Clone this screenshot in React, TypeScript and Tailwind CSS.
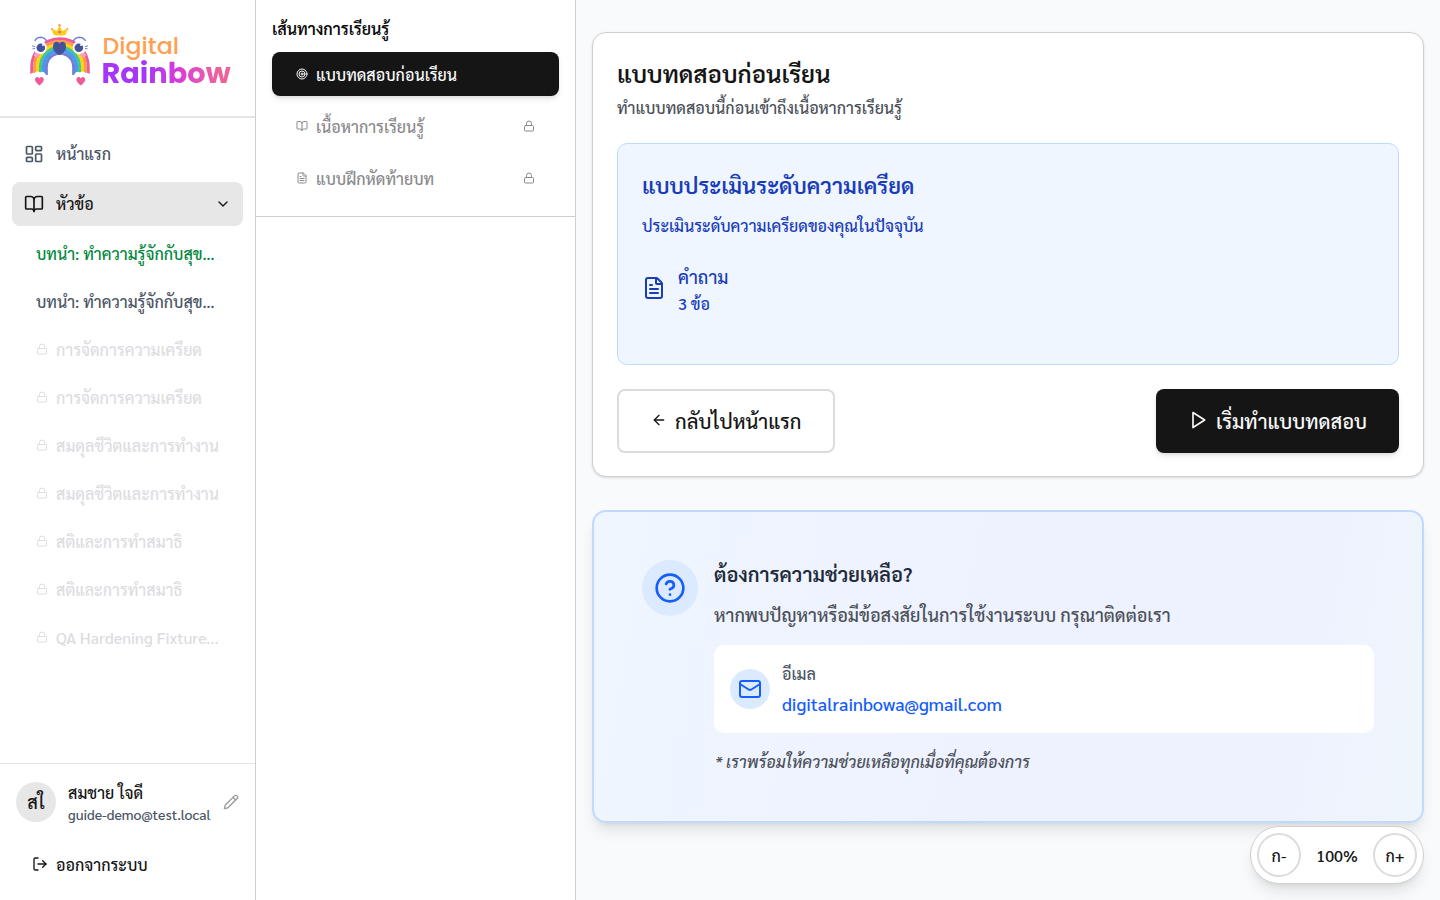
import React from "react";
import {
  LayoutDashboard, BookOpen, ChevronDown, Lock, Pencil, LogOut, Target, FileText,
  ArrowLeft, CircleHelp, Mail,
} from "lucide-react";

const lockedTopics = [
  "การจัดการความเครียด",
  "การจัดการความเครียด",
  "สมดุลชีวิตและการทำงาน",
  "สมดุลชีวิตและการทำงาน",
  "สติและการทำสมาธิ",
  "สติและการทำสมาธิ",
  "QA Hardening Fixture...",
];

function Heart({ x, y }: { x: number; y: number }) {
  return (
    <path
      transform={`translate(${x} ${y})`}
      d="M0 8.4C-2.6 6.3-4.4 4.6-4.4 2.5-4.4.9-3.3 0-2.2 0-1.2 0-.4.6 0 1.5.4.6 1.2 0 2.2 0 3.3 0 4.4.9 4.4 2.5 4.4 4.6 2.6 6.3 0 8.4Z"
      fill="#ef5b97"
    />
  );
}

function RainbowMark() {
  const bands = [
    { r: 28.2, c: "#ef5b97" },
    { r: 25.3, c: "#fb9a4b" },
    { r: 22.4, c: "#fdd60a" },
    { r: 19.5, c: "#46c58c" },
    { r: 16.6, c: "#3f9bf5" },
    { r: 13.7, c: "#6f80d8" },
  ];
  return (
    <svg width="64" height="66" viewBox="28 22 64 66" fill="none">
      {bands.map(({ r, c }) => (
        <path
          key={c}
          d={`M${60 - r} 75V66.9A${r} ${r} 0 0 1 ${60 + r} 66.9V75`}
          stroke={c}
          strokeWidth="3.1"
        />
      ))}
      <path d="M29 75.500Q31 72 34.500 73Q37 70.500 40 72.500Q43.500 70.500 45.500 74L47 77H29ZM91 75.500Q89 72 85.500 73Q83 70.500 80 72.500Q76.500 70.500 74.500 74L73 77H91Z" fill="#fff" />
      <path d="M53.500 34.700L51.500 28.600L56.800 31L59.600 25.500L62.400 31L67.700 28.600L65.700 34.700Q59.600 36.500 53.500 34.700Z" fill="#fdcb16" />
      <circle cx="59.600" cy="25.300" r="1.200" fill="#fb9a4b" />
      <circle cx="51.800" cy="29" r="1" fill="#fb9a4b" />
      <circle cx="67.400" cy="29" r="1" fill="#fb9a4b" />
      <circle cx="59.600" cy="32" r="1.300" fill="#ef5b97" />
      <circle cx="40" cy="47.500" r="6.800" fill="#fff" />
      <circle cx="79.500" cy="47.500" r="6.800" fill="#fff" />
      <circle cx="40.800" cy="47.800" r="4.300" fill="#46519c" />
      <circle cx="78.800" cy="47.800" r="4.300" fill="#46519c" />
      <circle cx="43" cy="45" r="1" fill="#fff" />
      <circle cx="81" cy="45" r="1" fill="#fff" />
      <path d="M35 41Q36 37.500 40.500 37.200Q45 37.500 46.800 41.500M73 41.500Q75 37.500 79.500 37.200Q84 37.500 85.500 41" stroke="#6f80d8" strokeWidth="1.400" />
      <path d="M32 45.800l3 .8M32.500 48.800l2.500-.3M88 45.800l-3 .8M87.500 48.800l-2.500-.3" stroke="#6f80d8" strokeWidth="1" />
      <ellipse cx="37" cy="55" rx="3" ry="2" fill="#fba3bd" />
      <ellipse cx="83" cy="55" rx="3" ry="2" fill="#fba3bd" />
      <path d="M59.500 55.200C55 53 53 50.500 53 46.500C53 43.500 54.500 41.800 56.500 41.800C58 41.800 59 42.500 59.500 43.500C60 42.500 61 41.800 62.500 41.800C64.500 41.800 66 43.500 66 46.500C66 50.500 64 53 59.500 55.200Z" fill="#46519c" />
      <Heart x={39.4} y={77} />
      <Heart x={80.8} y={77} />
    </svg>
  );
}

function Logo() {
  return (
    <div className="flex h-[118px] shrink-0 items-start border-b-2 border-[#e5e5e5] pl-7 pt-[22px]">
      <RainbowMark />
      <div className="ml-[9.5px] pt-[10px] font-['Poppins',sans-serif] whitespace-nowrap">
        <div className="h-[27px] pl-px text-[23.7px] leading-[27px] font-medium text-[#fda052]">Digital</div>
        <div className="w-fit bg-gradient-to-r from-[#a636f8] from-35% via-[#d93bd8] via-60% to-[#f0609a] to-90% bg-clip-text text-[28.8px] leading-[29px] font-bold text-transparent">
          Rainbow
        </div>
      </div>
    </div>
  );
}

function Sidebar() {
  return (
    <aside className="flex w-64 shrink-0 flex-col border-r border-[#cfcfcf] bg-white">
      <Logo />
      <nav className="flex flex-1 flex-col px-3 pt-[13.5px]">
        <a className="flex h-11 items-center gap-3 pl-3 font-medium text-[#4a5565]">
          <LayoutDashboard size={20} />
          <span className="pt-px">หน้าแรก</span>
        </a>
        <a className="mt-1.5 flex h-11 items-center gap-3 rounded-lg bg-[#e7e7e7] px-3 font-medium text-[#151515]">
          <BookOpen size={20} />
          <span className="flex-1 pt-px">หัวข้อ</span>
          <ChevronDown size={16} />
        </a>
        <div className="mt-1.5 flex flex-col gap-1 pl-6">
          <a className="flex h-11 items-center pt-px font-medium text-[#00873c]">บทนำ: ทำความรู้จักกับสุข…</a>
          <a className="flex h-11 items-center pt-px font-medium text-[#4a5565]">บทนำ: ทำความรู้จักกับสุข…</a>
          {lockedTopics.map((t, i) => (
            <a key={i} className="flex h-11 items-center gap-2 font-medium whitespace-nowrap text-[#dcdde1]">
              <Lock size={12} className="mb-px" />
              <span className="pt-px">{t}</span>
            </a>
          ))}
        </div>
      </nav>
      <div className="h-[137px] shrink-0 border-t border-[#e5e5e5] px-4 pt-[15px]">
        <div className="flex h-[46px] items-center">
          <div className="flex size-10 items-center justify-center rounded-full bg-[#e7e7e7] text-lg font-medium text-[#151515]">สใ</div>
          <div className="ml-3 flex-1 pt-[3px]">
            <div className="h-[22px] leading-[22px] font-medium text-[#151515]">สมชาย ใจดี</div>
            <div className="h-[22px] text-sm leading-[21px] font-medium text-[#4a5565]">guide-demo@test.local</div>
          </div>
          <Pencil size={16} className="text-[#9a9a9f]" />
        </div>
        <button className="mt-[17px] flex h-11 items-center gap-2 pl-4 font-medium text-[#151515]">
          <LogOut size={16} />
          <span className="pt-0.5">ออกจากระบบ</span>
        </button>
      </div>
    </aside>
  );
}

function LearningPath() {
  return (
    <section className="w-80 shrink-0 border-r border-[#cfcfcf] bg-white">
      <div className="flex h-[217px] flex-col border-b border-[#cfcfcf] px-4 pt-4">
        <h2 className="h-9 leading-[26px] font-semibold text-[#0a0a0a]">เส้นทางการเรียนรู้</h2>
        <div className="flex flex-col gap-2">
          <button className="flex h-11 items-center gap-2 rounded-lg bg-[#151515] px-6 font-medium text-[#fafafa] shadow-md">
            <Target size={12} />
            <span className="pt-0.5">แบบทดสอบก่อนเรียน</span>
          </button>
          <button className="flex h-11 items-center gap-2 px-6 font-medium text-[#8a8a8d]">
            <BookOpen size={12} />
            <span className="flex-1 pt-0.5 text-left">เนื้อหาการเรียนรู้</span>
            <Lock size={12} />
          </button>
          <button className="flex h-11 items-center gap-2 px-6 font-medium text-[#8a8a8d]">
            <FileText size={12} />
            <span className="flex-1 pt-0.5 text-left">แบบฝึกหัดท้ายบท</span>
            <Lock size={12} />
          </button>
        </div>
      </div>
    </section>
  );
}

function PretestCard() {
  return (
    <section className="h-[445px] rounded-[14px] border border-[#cfcfcf] bg-white px-6 pt-6 shadow-sm">
      <h1 className="h-9 text-2xl leading-8 font-semibold text-[#151515]">แบบทดสอบก่อนเรียน</h1>
      <p className="h-[26px] leading-[30px] font-medium text-[#4a4f58]">ทำแบบทดสอบนี้ก่อนเข้าถึงเนื้อหาการเรียนรู้</p>
      <div className="mt-6 h-[221.5px] rounded-[10px] border border-[#bedbff] bg-[#eff6ff] px-6 pt-6 text-[#193cb8]">
        <h2 className="h-9 text-[22px] leading-[35px] font-semibold">แบบประเมินระดับความเครียด</h2>
        <p className="mt-2 h-[26px] leading-[28px] font-medium">ประเมินระดับความเครียดของคุณในปัจจุบัน</p>
        <div className="mt-6 flex items-center gap-3">
          <FileText size={24} className="mb-px" />
          <div>
            <div className="h-[27px] text-lg leading-[30px] font-medium">คำถาม</div>
            <div className="h-[26px] leading-[30px] font-medium">3 ข้อ</div>
          </div>
        </div>
      </div>
      <div className="mt-6 flex justify-between text-xl font-medium">
        <button className="flex h-16 items-center gap-2 rounded-lg border-2 border-[#dcdce0] bg-white px-8 text-[#151515]">
          <ArrowLeft size={16} className="mb-px" />
          <span className="pt-px">กลับไปหน้าแรก</span>
        </button>
        <button className="flex h-16 items-center gap-2 rounded-lg bg-[#151515] px-8 text-[#fafafa] shadow-md">
          <svg className="mb-px" width="20" height="20" viewBox="0 0 24 24" fill="none" stroke="currentColor" strokeWidth="2" strokeLinejoin="round">
            <polygon points="6 3 20 12 6 21 6 3" />
          </svg>
          <span className="pt-px">เริ่มทำแบบทดสอบ</span>
        </button>
      </div>
    </section>
  );
}

function HelpCard() {
  return (
    <section className="mt-[32.5px] flex h-[313.5px] rounded-[14px] border-2 border-[#bedbff] bg-[linear-gradient(100deg,#eff6ff_0%,#eef2ff_50%,#eef2ff_84%,#eff5fc_96%)] p-12 shadow-lg">
      <div className="flex size-14 shrink-0 items-center justify-center rounded-full bg-[#dbeafe] text-[#155dfc]">
        <CircleHelp size={32} />
      </div>
      <div className="ml-4 flex-1">
        <h2 className="h-[32px] text-xl leading-[28px] font-semibold text-[#1e2939]">ต้องการความช่วยเหลือ?</h2>
        <p className="mt-2 h-[29px] text-lg leading-[29px] font-medium text-[#4a4f58]">หากพบปัญหาหรือมีข้อสงสัยในการใช้งานระบบ กรุณาติดต่อเรา</p>
        <div className="mt-4 flex h-[88px] items-center gap-3 rounded-[10px] bg-white px-4">
          <div className="flex size-10 items-center justify-center rounded-full bg-[#dbeafe] text-[#155dfc]">
            <Mail size={24} />
          </div>
          <div>
            <div className="h-[26px] leading-[27px] font-medium text-[#4a5565]">อีเมล</div>
            <a className="block h-[32px] text-lg leading-[36px] font-medium text-[#155dfc]">digitalrainbowa@gmail.com</a>
          </div>
        </div>
        <p className="mt-4 h-[26px] pl-px leading-[25px] font-medium text-[#4a4f58] italic">* เราพร้อมให้ความช่วยเหลือทุกเมื่อที่คุณต้องการ</p>
      </div>
    </section>
  );
}

function FontSizeControl() {
  return (
    <div className="absolute right-4 bottom-4 flex h-[58px] w-[174px] items-center justify-between rounded-full border border-[#cfcfcf] bg-white px-1.5 font-medium text-[#151515] shadow-lg">
      <button className="flex size-11 items-center justify-center rounded-full border-2 border-[#dcdce0] pt-0.5">ก-</button>
      <span className="pt-0.5">100%</span>
      <button className="flex size-11 items-center justify-center rounded-full border-2 border-[#dcdce0] pt-0.5">ก+</button>
    </div>
  );
}

export default function App() {
  return (
    <div className="relative flex h-[900px] w-[1440px] overflow-hidden bg-[#f9fafb] font-['Sarabun',sans-serif] text-base">
      <Sidebar />
      <LearningPath />
      <main className="flex-1 px-4 pt-8">
        <PretestCard />
        <HelpCard />
      </main>
      <FontSizeControl />
    </div>
  );
}
